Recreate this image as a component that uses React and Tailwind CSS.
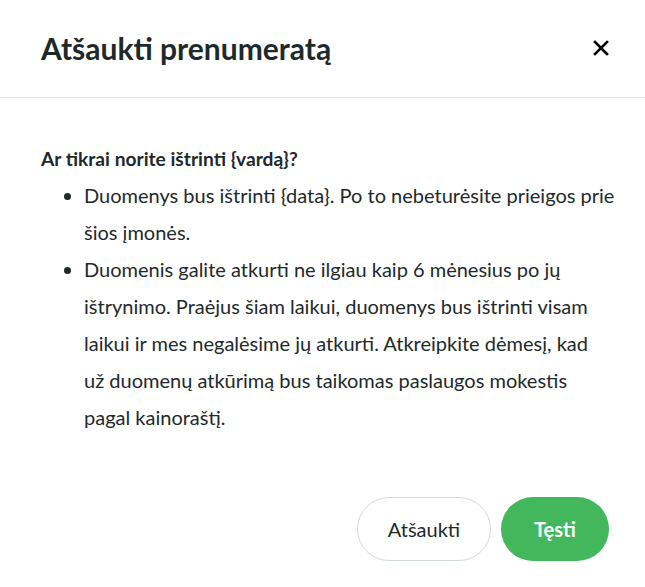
import React from "react";

export default function App() {
  return (
    <div className="w-[645px] h-[587px] bg-white text-[#1e2a2a] font-['Lato','Noto_Sans',sans-serif] flex flex-col">
      <div className="h-[98px] border-b border-[#e2e2e8] flex items-center justify-between pl-[41px] pr-[36px] pb-[1px]">
        <h1 className="text-[30px] font-bold">Atšaukti prenumeratą</h1>
        <button className="w-[16px] h-[16px] flex items-center justify-center">
          <svg width="16" height="16" viewBox="0 0 16 16">
            <path d="M2 2L14 14M14 2L2 14" stroke="#000" strokeWidth="2.6" strokeLinecap="square" />
          </svg>
        </button>
      </div>
      <div className="pl-[41px] pr-[30px] pt-[48px]">
        <p className="text-[19.2px] font-bold leading-[26px]">Ar tikrai norite ištrinti {"{vardą}"}?</p>
        <ul className="list-disc pl-[43px] text-[20px] leading-[37px] mt-[5px]">
          <li>Duomenys bus ištrinti {"{data}"}. Po to nebeturėsite prieigos prie šios įmonės.</li>
          <li>Duomenis galite atkurti ne ilgiau kaip 6 mėnesius po jų ištrynimo. Praėjus šiam laikui, duomenys bus ištrinti visam laikui ir mes negalėsime jų atkurti. Atkreipkite dėmesį, kad už{"\u00a0"}duomenų atkūrimą bus taikomas paslaugos mokestis pagal kainoraštį.</li>
        </ul>
      </div>
      <div className="flex-1" />
      <div className="flex justify-end gap-[10px] pr-[36px] pb-[26px]">
        <button className="w-[134px] h-[64px] rounded-full border border-[#d3dada] text-[20px] text-[#1e2a2a]">Atšaukti</button>
        <button className="w-[108px] h-[64px] rounded-full bg-[#43b75b] text-white text-[20px] font-bold">Tęsti</button>
      </div>
    </div>
  );
}
